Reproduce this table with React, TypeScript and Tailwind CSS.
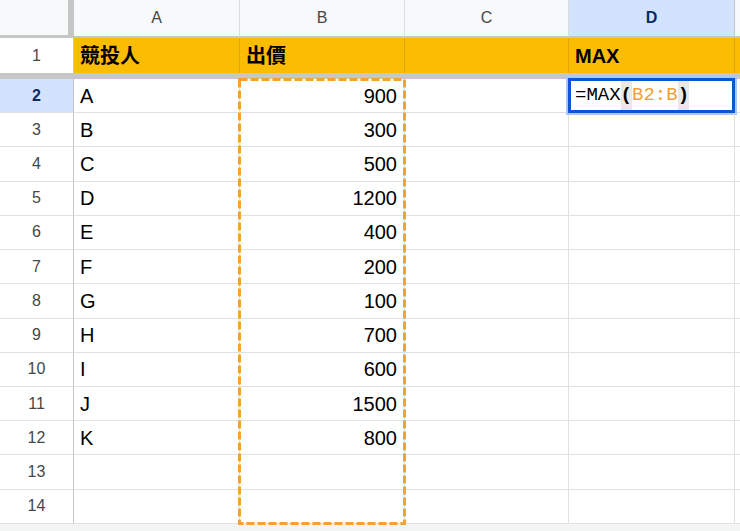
const font = "font-['Liberation_Sans','Noto_Sans_CJK_TC',sans-serif]";

const rows = [
  { n: 2, name: "A", bid: "900" },
  { n: 3, name: "B", bid: "300" },
  { n: 4, name: "C", bid: "500" },
  { n: 5, name: "D", bid: "1200" },
  { n: 6, name: "E", bid: "400" },
  { n: 7, name: "F", bid: "200" },
  { n: 8, name: "G", bid: "100" },
  { n: 9, name: "H", bid: "700" },
  { n: 10, name: "I", bid: "600" },
  { n: 11, name: "J", bid: "1500" },
  { n: 12, name: "K", bid: "800" },
  { n: 13, name: "", bid: "" },
  { n: 14, name: "", bid: "" },
];

export default function App() {
  return (
    <div className={`relative w-[740px] h-[531px] overflow-hidden bg-white flex flex-col ${font}`}>
      {/* Column headers */}
      <div className="flex h-[38px] shrink-0 text-[16px] text-[#444746]">
        <div className="w-[74px] shrink-0 bg-[#f8f9fa] border-r-[6px] border-b-[3px] border-[#c4c7c5]" />
        <div className="w-[166px] shrink-0 bg-[#f8f9fa] border-r border-r-[#dadce0] border-b-2 border-b-[#c4c7c5] flex items-center justify-center">A</div>
        <div className="w-[165px] shrink-0 bg-[#f8f9fa] border-r border-r-[#dadce0] border-b-2 border-b-[#c4c7c5] flex items-center justify-center">B</div>
        <div className="w-[164px] shrink-0 bg-[#f8f9fa] border-r border-r-[#dadce0] border-b-2 border-b-[#c4c7c5] flex items-center justify-center">C</div>
        <div className="w-[166px] shrink-0 bg-[#d3e3fd] border-r border-r-[#c4c7c5] border-b-2 border-b-[#c4c7c5] flex items-center justify-center font-bold text-[#0b2a63]">D</div>
        <div className="flex-1 bg-[#f8f9fa] border-b-2 border-b-[#c4c7c5]" />
      </div>

      {/* Row 1: header row */}
      <div className="flex h-[35px] shrink-0">
        <div className="w-[74px] shrink-0 border-r border-[#c4c7c5] flex items-center justify-center text-[16px] text-[#444746]">1</div>
        <div className="w-[166px] shrink-0 bg-[#fbbc04] border-r border-[#e3a500] flex items-center px-[6px] text-[20px] font-bold text-black">競投人</div>
        <div className="w-[165px] shrink-0 bg-[#fbbc04] border-r border-[#e3a500] flex items-center px-[6px] text-[20px] font-bold text-black">出價</div>
        <div className="w-[164px] shrink-0 bg-[#fbbc04] border-r border-[#e3a500]" />
        <div className="w-[166px] shrink-0 bg-[#fbbc04] border-r border-[#e3a500] flex items-center px-[6px] text-[20px] font-bold text-black">MAX</div>
        <div className="flex-1 bg-[#fbbc04]" />
      </div>

      {/* Frozen row divider */}
      <div className="h-[6px] shrink-0 bg-[#c7c7c7]" />

      {rows.map((r) => (
        <div key={r.n} className="flex h-[34.23px] shrink-0 text-[20px] text-black">
          <div
            className={`w-[74px] shrink-0 border-r border-b border-r-[#c4c7c5] border-b-[#e1e1e1] flex items-center justify-center text-[16px] ${
              r.n === 2 ? "bg-[#d3e3fd] font-bold text-[#0b2a63]" : "text-[#444746]"
            }`}
          >
            {r.n}
          </div>
          <div className="w-[166px] shrink-0 border-r border-b border-[#e1e1e1] flex items-center px-[6px]">{r.name}</div>
          <div className="w-[165px] shrink-0 border-r border-b border-[#e1e1e1] flex items-center justify-end px-[7px]">{r.bid}</div>
          <div className="w-[164px] shrink-0 border-r border-b border-[#e1e1e1]" />
          <div className="relative w-[166px] shrink-0 border-r border-b border-[#e1e1e1]">
            {r.n === 2 && (
              <div className="absolute -left-[1px] -top-[1px] -right-[1px] -bottom-[1px] border-[3px] border-[#0b57d0] shadow-[0_0_0_2px_#a8c7fa] bg-white flex items-center px-[4px] font-['Liberation_Mono',monospace] text-[19px] text-black">
                <span>=MAX</span>
                <span className="bg-[#e8e8e8] font-bold">(</span>
                <span className="text-[#f29e34]">B2:B</span>
                <span className="bg-[#e8e8e8] font-bold">)</span>
              </div>
            )}
          </div>
          <div className="flex-1 border-b border-[#e1e1e1]" />
        </div>
      ))}

      <div className="flex-1 bg-[#f3f4f4]" />

      {/* Copy range marquee around B2:B14 */}
      <svg className="absolute left-[238px] top-[78px] pointer-events-none" width="168" height="447">
        <rect x="1.5" y="1.5" width="165" height="444" fill="none" stroke="#f4a232" strokeWidth="3" strokeDasharray="8 3" />
      </svg>
    </div>
  );
}
